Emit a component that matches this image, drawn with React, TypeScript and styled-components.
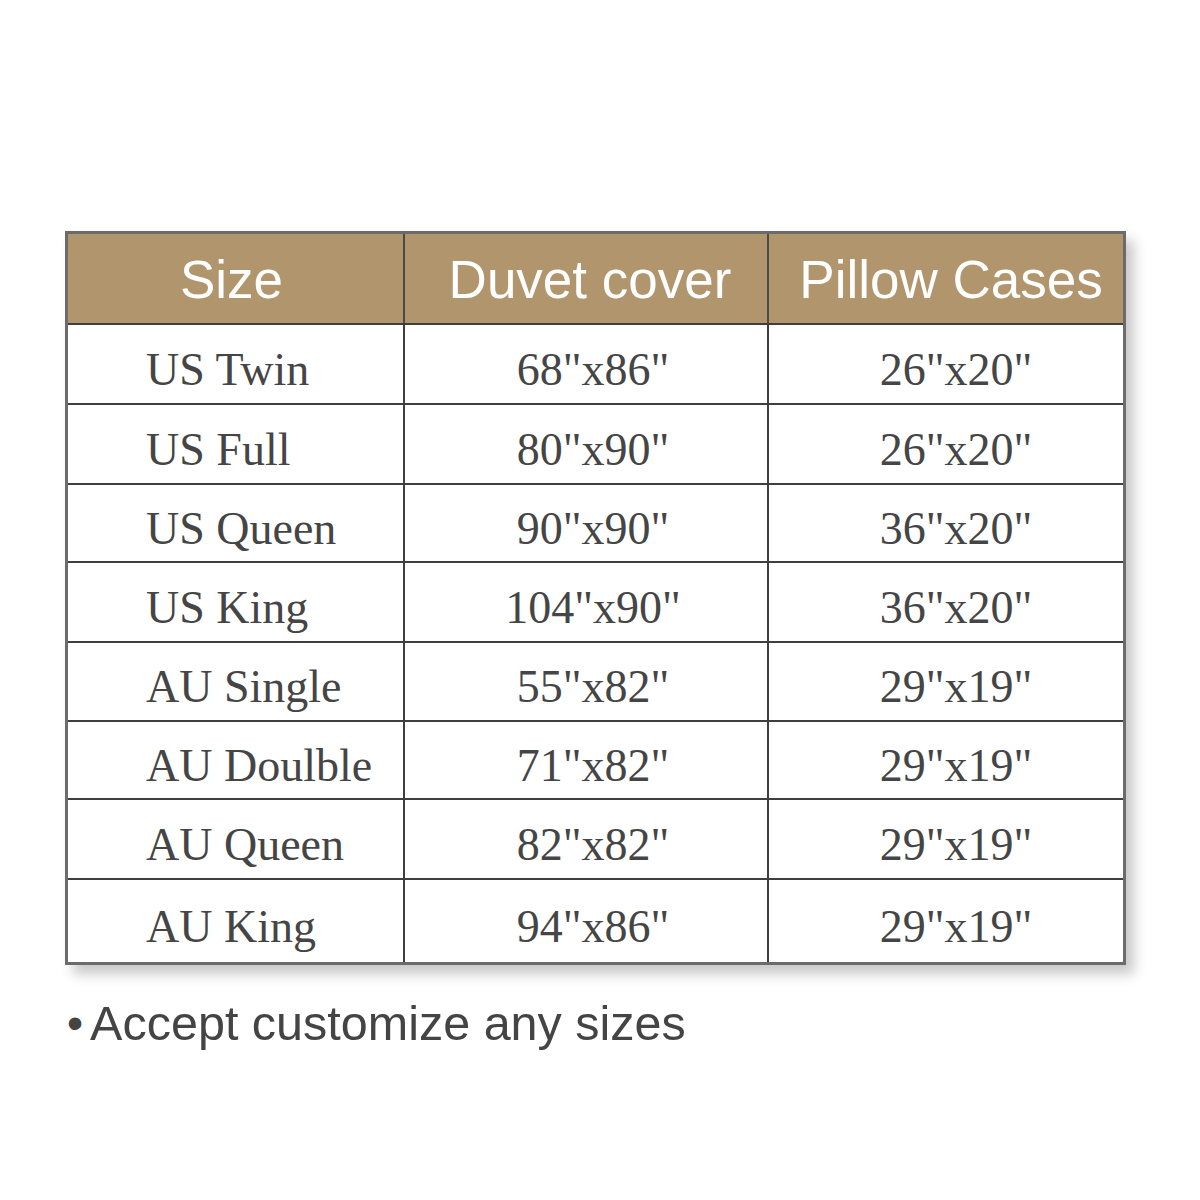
import React from "react";
import styled, { createGlobalStyle } from "styled-components";

const Global = createGlobalStyle`
  html, body { margin: 0; padding: 0; background: #fff; }
  body { width: 1200px; height: 1200px; overflow: hidden; }
`;

const Page = styled.div`
  width: 1200px;
  height: 1200px;
  box-sizing: border-box;
  padding: 231px 0 0 65px;
  background: #fff;
`;

const Table = styled.div`
  width: 1061px;
  box-sizing: border-box;
  border: 3px solid #6b6b6b;
  box-shadow: 8px 9px 12px rgba(0, 0, 0, 0.22);
  background: #fff;
`;

const Row = styled.div<{ $h: number; $head?: boolean }>`
  display: grid;
  grid-template-columns: 335px 364px 356px;
  height: ${(p) => p.$h}px;
  box-sizing: border-box;
  background: ${(p) => (p.$head ? "#b1956d" : "#fff")};
  border-top: ${(p) => (p.$head ? "none" : "2px solid #3e3e3e")};
`;

const HeadCell = styled.div<{ $first?: boolean; $shift: number }>`
  display: flex;
  align-items: center;
  justify-content: center;
  box-sizing: border-box;
  border-left: ${(p) => (p.$first ? "none" : "2px solid #4a4a4a")};
  font-family: "Liberation Sans", Arial, sans-serif;
  font-size: 53px;
  color: #fff;
  padding-left: ${(p) => Math.max(p.$shift, 0)}px;
  padding-right: ${(p) => Math.max(-p.$shift, 0)}px;
  padding-top: 2px;
`;

const Cell = styled.div<{ $first?: boolean; $shift: number }>`
  display: flex;
  align-items: center;
  justify-content: ${(p) => (p.$first ? "flex-start" : "center")};
  box-sizing: border-box;
  border-left: ${(p) => (p.$first ? "none" : "2px solid #3e3e3e")};
  font-family: "Liberation Serif", "Times New Roman", serif;
  font-size: 46px;
  color: #454545;
  padding-left: ${(p) => p.$shift}px;
  padding-top: 10px;
`;

const Note = styled.div`
  display: flex;
  align-items: center;
  margin-top: 30px;
  margin-left: 2px;
  font-family: "Liberation Sans", Arial, sans-serif;
  font-size: 48.5px;
  color: #444;
`;

const Bullet = styled.span`
  font-size: 46px;
  margin-right: 7px;
`;

const rows: [string, string, string, number][] = [
  ["US Twin", '68"x86"', '26"x20"', 80],
  ["US Full", '80"x90"', '26"x20"', 80],
  ["US Queen", '90"x90"', '36"x20"', 78],
  ["US King", '104"x90"', '36"x20"', 80],
  ["AU Single", '55"x82"', '29"x19"', 79],
  ["AU Doulble", '71"x82"', '29"x19"', 78],
  ["AU Queen", '82"x82"', '29"x19"', 80],
  ["AU King", '94"x86"', '29"x19"', 84],
];

export default function App() {
  return (
    <Page>
      <Global />
      <Table>
        <Row $h={89} $head>
          <HeadCell $first $shift={-8}>Size</HeadCell>
          <HeadCell $shift={8}>Duvet cover</HeadCell>
          <HeadCell $shift={10}>Pillow Cases</HeadCell>
        </Row>
        {rows.map(([a, b, c, h]) => (
          <Row key={a} $h={h}>
            <Cell $first $shift={78}>{a}</Cell>
            <Cell $shift={14}>{b}</Cell>
            <Cell $shift={20}>{c}</Cell>
          </Row>
        ))}
      </Table>
      <Note>
        <Bullet>•</Bullet>
        Accept customize any sizes
      </Note>
    </Page>
  );
}
